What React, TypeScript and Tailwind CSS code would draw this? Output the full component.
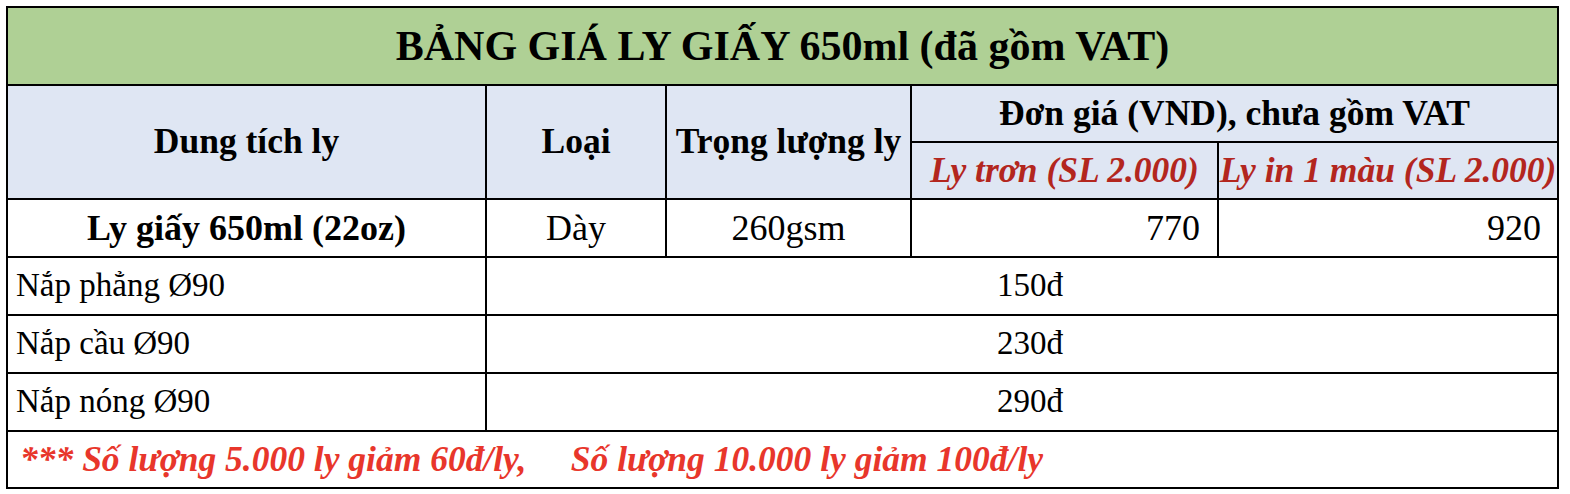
import type { ReactElement } from 'react';

type Lid = { name: string; price: string };

const lids: Lid[] = [
  { name: 'Nắp phẳng Ø90', price: '150đ' },
  { name: 'Nắp cầu Ø90', price: '230đ' },
  { name: 'Nắp nóng Ø90', price: '290đ' },
];

const cell = 'border-2 border-black p-0';

export default function App(): ReactElement {
  return (
    <div className="min-h-[494px] bg-white px-[6px] pt-[6px] font-['Liberation_Serif',serif] text-black">
      <table className="w-[1551px] table-fixed border-collapse">
        <colgroup>
          <col className="w-[479px]" />
          <col className="w-[180px]" />
          <col className="w-[245px]" />
          <col className="w-[307px]" />
          <col className="w-[340px]" />
        </colgroup>
        <tbody>
          <tr className="h-[78px] bg-[#afd095]">
            <td colSpan={5} className={`${cell} text-center text-[42px] font-bold`}>
              BẢNG GIÁ LY GIẤY 650ml (đã gồm VAT)
            </td>
          </tr>

          {/* header */}
          <tr className="h-[57px] bg-[#dfe6f3] text-[35.5px] font-bold">
            <td rowSpan={2} className={`${cell} text-center`}>
              Dung tích ly
            </td>
            <td rowSpan={2} className={`${cell} text-center`}>
              Loại
            </td>
            <td rowSpan={2} className={`${cell} text-center whitespace-nowrap`}>
              Trọng lượng ly
            </td>
            <td colSpan={2} className={`${cell} text-center`}>
              Đơn giá (VND), chưa gồm VAT
            </td>
          </tr>
          <tr className="h-[57px] bg-[#dfe6f3] text-[35.5px] font-bold italic text-[#b3261e]">
            <td className={`${cell} text-center whitespace-nowrap`}>Ly trơn (SL 2.000)</td>
            <td className={`${cell} text-center whitespace-nowrap`}>Ly in 1 màu (SL 2.000)</td>
          </tr>

          {/* cup row */}
          <tr className="h-[58px] text-[36px]">
            <td className={`${cell} text-center font-bold`}>Ly giấy 650ml (22oz)</td>
            <td className={`${cell} text-center`}>Dày</td>
            <td className={`${cell} text-center`}>260gsm</td>
            <td className={`${cell} pr-[17px] text-right`}>770</td>
            <td className={`${cell} pr-[16px] text-right`}>920</td>
          </tr>

          {lids.map((lid) => (
            <tr key={lid.name} className="h-[58px] text-[33px]">
              <td className={`${cell} pl-[8px] text-left`}>{lid.name}</td>
              <td colSpan={4} className={`${cell} pl-[16px] text-center`}>
                {lid.price}
              </td>
            </tr>
          ))}

          <tr className="h-[57px]">
            <td
              colSpan={5}
              className={`${cell} pl-[12px] text-left text-[35.5px] font-bold italic text-[#e8362b] whitespace-pre`}
            >
              {'*** Số lượng 5.000 ly giảm 60đ/ly,     Số lượng 10.000 ly giảm 100đ/ly'}
            </td>
          </tr>
        </tbody>
      </table>
    </div>
  );
}
